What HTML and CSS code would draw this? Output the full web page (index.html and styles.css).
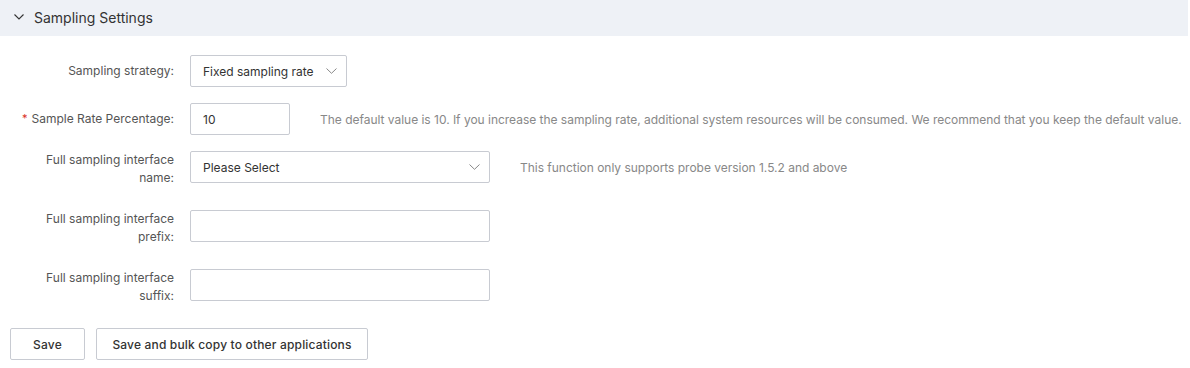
FILE: index.html
```html
<!DOCTYPE html>
<html>
<head>
<meta charset="utf-8">
<link rel="stylesheet" href="styles.css">
</head>
<body>
<div class="panel">
  <div class="panel-header">
    <svg class="caret" width="10" height="6" viewBox="0 0 10 6"><path d="M0.5 0.5 L5 5 L9.5 0.5" fill="none" stroke="#333" stroke-width="1.1"/></svg>
    <span class="panel-title">Sampling Settings</span>
  </div>
  <div class="form">
    <div class="row">
      <div class="label single">Sampling strategy:</div>
      <div class="control">
        <div class="select w156"><span class="select-value">Fixed sampling rate</span><svg class="arrow" width="11" height="6" viewBox="0 0 11 6"><path d="M0.5 0.5 L5.5 5.3 L10.5 0.5" fill="none" stroke="#888" stroke-width="1"/></svg></div>
      </div>
    </div>
    <div class="row">
      <div class="label single"><span class="req">*</span>Sample Rate Percentage:</div>
      <div class="control">
        <div class="input w100"><span class="input-value">10</span></div>
        <span class="help">The default value is 10. If you increase the sampling rate, additional system resources will be consumed. We recommend that you keep the default value.</span>
      </div>
    </div>
    <div class="row tall">
      <div class="label multi">Full sampling interface name:</div>
      <div class="control">
        <div class="select w300"><span class="select-value">Please Select</span><svg class="arrow" width="11" height="6" viewBox="0 0 11 6"><path d="M0.5 0.5 L5.5 5.3 L10.5 0.5" fill="none" stroke="#888" stroke-width="1"/></svg></div>
        <span class="help">This function only supports probe version 1.5.2 and above</span>
      </div>
    </div>
    <div class="row tall">
      <div class="label multi">Full sampling interface prefix:</div>
      <div class="control">
        <div class="input w300"></div>
      </div>
    </div>
    <div class="row tall">
      <div class="label multi">Full sampling interface suffix:</div>
      <div class="control">
        <div class="input w300"></div>
      </div>
    </div>
  </div>
  <div class="actions">
    <button class="btn save">Save</button>
    <button class="btn bulk">Save and bulk copy to other applications</button>
  </div>
</div>
</body>
</html>
```

FILE: styles.css
```css
html, body {
  margin: 0;
  padding: 0;
  background: #ffffff;
}
body {
  font-family: Inter, "Liberation Sans", sans-serif;
  color: #333;
}
.panel {
  width: 1190px;
}
.panel-header {
  height: 36px;
  background: #eef1f6;
  display: flex;
  align-items: center;
  padding-left: 14px;
  margin-right: 2px;
}
.caret {
  margin-right: 10px;
  margin-top: -3px;
}
.panel-title {
  font-size: 14px;
  color: #333;
  margin-top: -1px;
}
.form {
  padding-top: 19px;
  display: flex;
  flex-direction: column;
  gap: 16px;
}
.row {
  display: flex;
  align-items: flex-start;
}
.row.tall {
  min-height: 43px;
}
.label {
  width: 174px;
  flex: none;
  text-align: right;
  font-size: 12px;
  color: #555;
  padding-right: 16px;
  box-sizing: content-box;
}
.label.single {
  height: 32px;
  line-height: 32px;
}
.label.multi {
  line-height: 18px;
  padding-left: 40px;
  width: 134px;
}
.req {
  color: #d93026;
  margin-right: 4px;
  font-size: 11px;
  line-height: 1;
  vertical-align: 1px;
}
.control {
  display: flex;
  align-items: center;
  height: 32px;
}
.select, .input {
  box-sizing: border-box;
  height: 32px;
  border: 1px solid #c8cbd2;
  border-radius: 2px;
  background: #fff;
  display: flex;
  align-items: center;
  padding-left: 12px;
  font-size: 12px;
  color: #333;
}
.select {
  justify-content: space-between;
  padding-right: 9px;
}
.w156 { width: 157px; }
.w100 { width: 100px; }
.w300 { width: 300px; }
.help {
  margin-left: 30px;
  font-size: 12px;
  color: #888;
  white-space: nowrap;
  letter-spacing: -0.02px;
}
.actions {
  display: flex;
  gap: 11px;
  padding: 16px 0 0 10px;
}
.btn {
  box-sizing: border-box;
  height: 32px;
  background: #fff;
  border: 1px solid #c8cbd2;
  border-radius: 2px;
  font-family: Inter, "Liberation Sans", sans-serif;
  font-size: 12px;
  font-weight: 500;
  letter-spacing: 0.17px;
  color: #333;
  padding: 0;
}
.btn.save { width: 75px; }
.btn.bulk { width: 272px; }
```
